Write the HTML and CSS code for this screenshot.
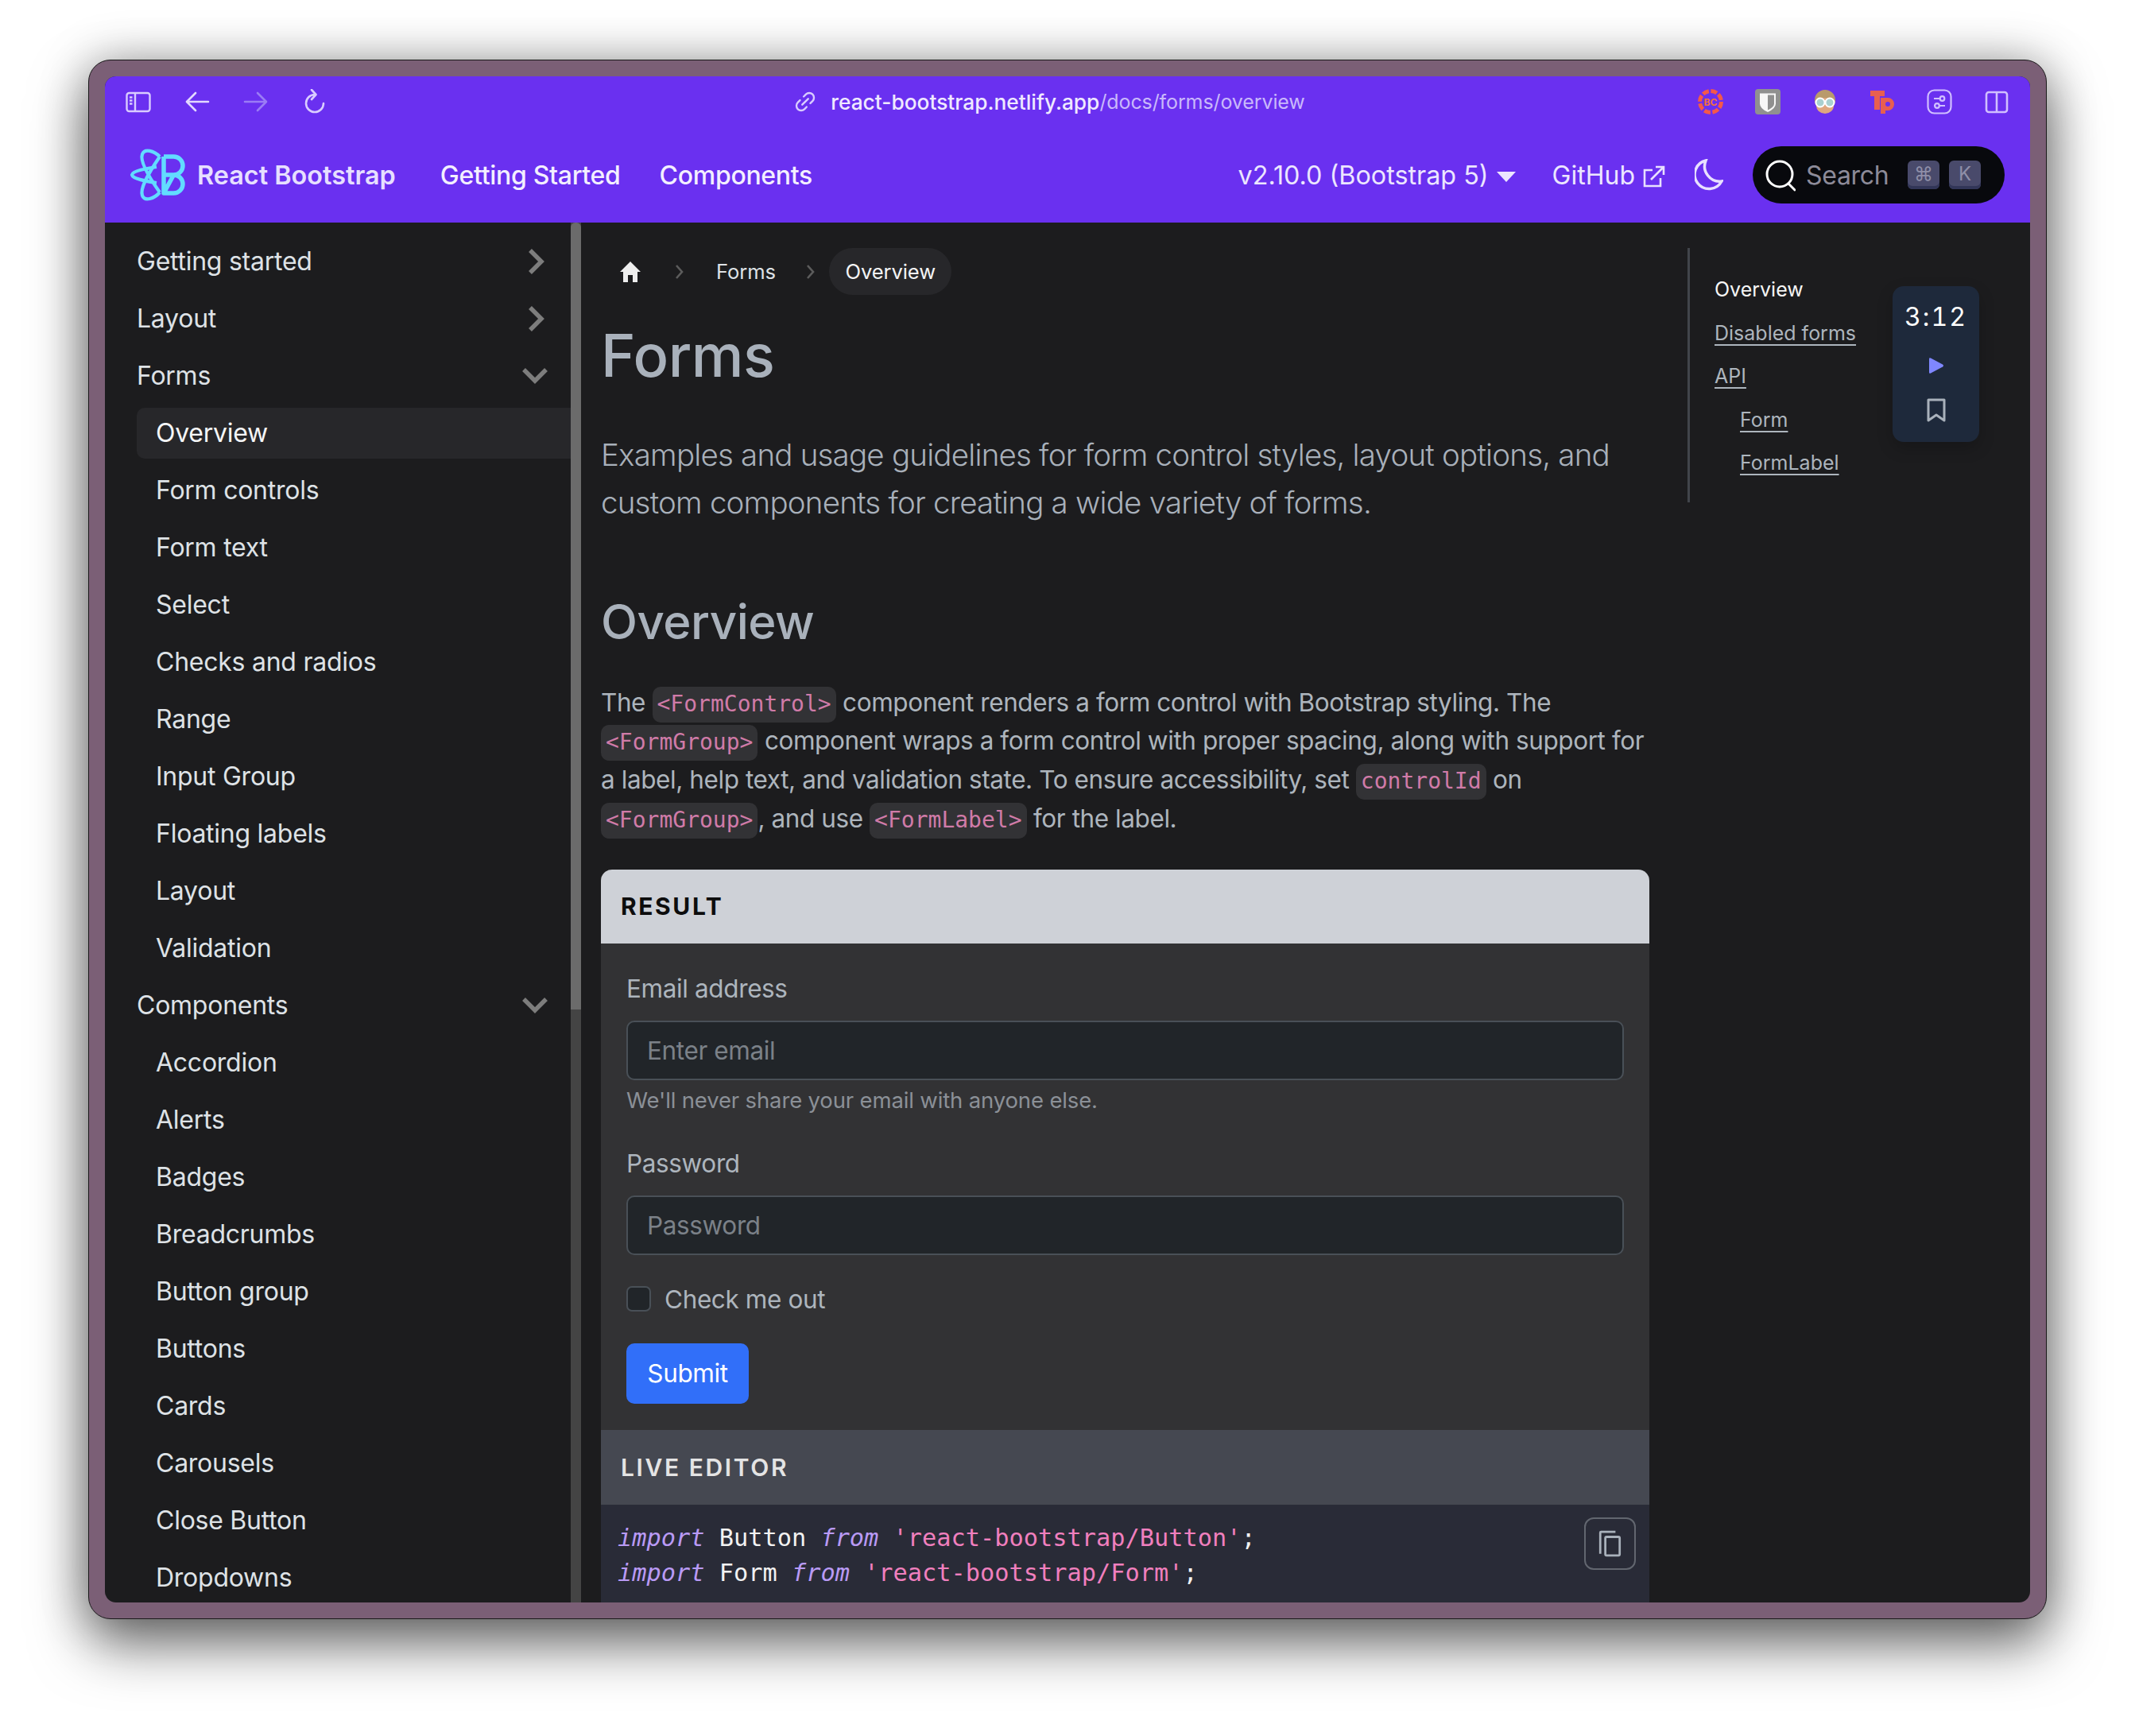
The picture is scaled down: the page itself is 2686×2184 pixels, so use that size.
FILE: index.html
```html
<!DOCTYPE html>
<html lang="en">
<head>
<meta charset="utf-8">
<title>Forms | React Bootstrap</title>
<link rel="stylesheet" href="styles.css">
</head>
<body>
<div class="window">
  <div class="screen">
    <header class="purple">
      <div class="toolbar">
        <div class="tool-left">
          <svg class="ti" viewBox="0 0 32 32" fill="none" stroke="#d9ccff" stroke-width="2.4"><rect x="1.500" y="5" width="29" height="23" rx="3"/><path d="M12 5v23"/><path d="M5 10.500h3.500M5 14.500h3.500M5 18.500h3.500"/></svg>
          <svg class="ti" viewBox="0 0 32 32" fill="none" stroke="#e2d8ff" stroke-width="2.6" stroke-linecap="round" stroke-linejoin="round"><path d="M30 16H4M14 5 3 16l11 11"/></svg>
          <svg class="ti" viewBox="0 0 32 32" fill="none" stroke="#9a7cf5" stroke-width="2.6" stroke-linecap="round" stroke-linejoin="round"><path d="M2 16h26M18 5l11 11-11 11"/></svg>
          <svg class="ti" viewBox="0 0 32 32" fill="none" stroke="#d9ccff" stroke-width="2.6" stroke-linecap="round" stroke-linejoin="round"><path d="M16 7A11 11 0 1 0 27 18M12 1l5.500 6-5.500 6"/></svg>
        </div>
        <div class="url">
          <svg class="link-ico" viewBox="0 0 28 28" fill="none" stroke="#d9ccff" stroke-width="2.6" stroke-linecap="round"><path d="M12 7l3-3a6 6 0 0 1 9 9l-3 3"/><path d="M16 21l-3 3a6 6 0 0 1-9-9l3-3"/><path d="M10 18l8-8"/></svg>
          <span class="host">react-bootstrap.netlify.app</span><span class="path">/docs/forms/overview</span>
        </div>
        <div class="tool-right">
          <svg class="ext" viewBox="0 0 32 32"><circle cx="16" cy="16" r="13.500" fill="none" stroke="#f4584a" stroke-width="5" stroke-dasharray="8 2.600"/><text x="16" y="20.500" text-anchor="middle" class="bc">BC</text></svg>
          <svg class="ext" viewBox="0 0 32 32"><rect width="32" height="32" rx="4" fill="#909090"/><path d="M6 5.500h20v13q0 6-10 10.500-10-4.500-10-10.500z" fill="#f7f7f7"/><path d="M16 7.500h8v11q0 4-8 8z" fill="#909090"/></svg>
          <svg class="ext" viewBox="0 0 32 32"><ellipse cx="16" cy="14" rx="13" ry="13" fill="#b99a6c"/><ellipse cx="16" cy="21" rx="11" ry="10" fill="#dfa77f"/><circle cx="10" cy="17" r="5.500" fill="#a9d0d0" stroke="#fff" stroke-width="2"/><circle cx="22" cy="17" r="5.500" fill="#a9d0d0" stroke="#fff" stroke-width="2"/></svg>
          <svg class="ext" viewBox="0 0 32 32"><path d="M1 2h18v7h-6v17H6V9H1z" fill="#e85f50"/><path fill-rule="evenodd" d="M14 11h9a8 8 0 0 1 0 16h-3v4h-6zM23 16a3 3 0 1 0 0 6 3 3 0 0 0 0-6z" fill="#e85f50"/></svg>
          <svg class="ext" viewBox="0 0 32 32" fill="none" stroke="#d0bfff" stroke-width="2.200"><rect x="1.500" y="1.500" width="29" height="29" rx="8"/><path d="M9 12h14M9 21h14"/><circle cx="19.500" cy="12" r="2.800" fill="#6a30f0"/><circle cx="13" cy="21" r="2.800" fill="#6a30f0"/></svg>
          <svg class="ext" viewBox="0 0 32 32" fill="none" stroke="#d0bfff" stroke-width="2.600"><rect x="3" y="4" width="26" height="25" rx="3"/><path d="M16 4v25"/></svg>
        </div>
      </div>
      <nav class="navbar">
        <a class="brand">
          <svg class="logo" viewBox="0 0 68 64" fill="none" stroke="#62dcff" stroke-width="4.200" stroke-linejoin="round"><path d="M37 9C30 2 18-2 15 6c-3 8 5 24 22 48M37 54c-7 8-19 12-22 4-3-8 5-24 22-49"/><path d="M33 22C20 24 3 27 2 32c1 5 18 8 31 10"/><path stroke-width="5.500" d="M42 9h12.500a11.500 11.500 0 0 1 0 23H42M54.500 32a11.500 11.500 0 0 1 0 23H42zM42 9v46"/></svg>
          <span>React Bootstrap</span>
        </a>
        <a class="nav-link first">Getting Started</a>
        <a class="nav-link">Components</a>
        <span class="spring"></span>
        <a class="nav-link version">v2.10.0 (Bootstrap 5)<i class="caret"></i></a>
        <a class="nav-link github">GitHub
          <svg class="extlink" viewBox="0 0 28 28" fill="none" stroke="#e8e0ff" stroke-width="2.600"><path d="M12 6H2v20h20V16"/><path d="M10 18 25 3M16 2h10v10"/></svg>
        </a>
        <svg class="moon" viewBox="0 0 36 40" fill="none" stroke="#e8e0ff" stroke-width="3.500"><path d="M14 2A18 18 0 1 0 34 28 19 19 0 0 1 14 2z"/></svg>
        <div class="search">
          <svg class="glass" viewBox="0 0 38 42" fill="none" stroke="#fff" stroke-width="3"><circle cx="18" cy="20" r="16"/><path d="M29 32l8 8" stroke-linecap="round"/></svg>
          <span class="search-label">Search</span>
          <kbd class="key">⌘</kbd><kbd class="key">K</kbd>
        </div>
      </nav>
    </header>
    <div class="body-row">
      <aside class="sidebar">
        <ul class="side-list">
          <li class="sec">Getting started<svg class="chev" viewBox="0 0 24 32"><path d="M4 2l14 14L4 30" /></svg></li>
          <li class="sec">Layout<svg class="chev" viewBox="0 0 24 32"><path d="M4 2l14 14L4 30" /></svg></li>
          <li class="sec">Forms<svg class="chev down" viewBox="0 0 32 24"><path d="M2 4l14 14L30 4" /></svg></li>
          <li class="sub active">Overview</li>
          <li class="sub">Form controls</li>
          <li class="sub">Form text</li>
          <li class="sub">Select</li>
          <li class="sub">Checks and radios</li>
          <li class="sub">Range</li>
          <li class="sub">Input Group</li>
          <li class="sub">Floating labels</li>
          <li class="sub">Layout</li>
          <li class="sub">Validation</li>
          <li class="sec">Components<svg class="chev down" viewBox="0 0 32 24"><path d="M2 4l14 14L30 4" /></svg></li>
          <li class="sub">Accordion</li>
          <li class="sub">Alerts</li>
          <li class="sub">Badges</li>
          <li class="sub">Breadcrumbs</li>
          <li class="sub">Button group</li>
          <li class="sub">Buttons</li>
          <li class="sub">Cards</li>
          <li class="sub">Carousels</li>
          <li class="sub">Close Button</li>
          <li class="sub">Dropdowns</li>
        </ul>
        <div class="scrolltrack"><div class="scrollthumb"></div></div>
      </aside>
      <main class="content">
        <div class="crumbs">
          <svg class="home" viewBox="0 0 28 28"><path d="M14 1 1 14h4v13h6v-9h6v9h6V14h4z" fill="#eee"/></svg>
          <svg class="sep" viewBox="0 0 12 20"><path d="M2 2l7 8-7 8"/></svg>
          <span class="crumb">Forms</span>
          <svg class="sep" viewBox="0 0 12 20"><path d="M2 2l7 8-7 8"/></svg>
          <span class="crumb current">Overview</span>
        </div>
        <h1>Forms</h1>
        <p class="lead">Examples and usage guidelines for form control styles, layout options, and custom components for creating a wide variety of forms.</p>
        <h2>Overview</h2>
        <p class="para">The <code>&lt;FormControl&gt;</code> component renders a form control with Bootstrap styling. The <code>&lt;FormGroup&gt;</code> component wraps a form control with proper spacing, along with support for a label, help text, and validation state. To ensure accessibility, set <code>controlId</code> on <code>&lt;FormGroup&gt;</code>, and use <code>&lt;FormLabel&gt;</code> for the label.</p>
        <section class="card">
          <div class="card-head result">RESULT</div>
          <form class="card-body">
            <label class="lbl">Email address</label>
            <div class="input">Enter email</div>
            <div class="help">We'll never share your email with anyone else.</div>
            <label class="lbl second">Password</label>
            <div class="input">Password</div>
            <div class="check"><span class="box"></span>Check me out</div>
            <div class="submit">Submit</div>
          </form>
          <div class="card-head live">LIVE EDITOR</div>
          <div class="code">
            <pre class="code-text"><em>import</em> Button <em>from</em> <b>'react-bootstrap/Button'</b>;
<em>import</em> Form <em>from</em> <b>'react-bootstrap/Form'</b>;</pre>
            <div class="copy"><svg viewBox="0 0 28 32" fill="none" stroke="#a9b1bb" stroke-width="2.600"><path d="M2 28V3q0-1 1-1h17"/><rect x="8" y="8" width="17" height="22" rx="1.500"/></svg></div>
          </div>
        </section>
      </main>
      <aside class="toc">
        <ul class="toc-list">
          <li class="toc-active">Overview</li>
          <li><a>Disabled forms</a></li>
          <li><a>API</a></li>
          <li class="toc-in"><a>Form</a></li>
          <li class="toc-in"><a>FormLabel</a></li>
        </ul>
      </aside>
      <div class="timer">
        <div class="time">3:12</div>
        <svg class="play" viewBox="0 0 20 22"><path d="M1 2.500q0-2 2-1l15 8q2 1.500 0 3l-15 8q-2 1-2-1z" fill="#7f87ff"/></svg>
        <svg class="mark" viewBox="0 0 24 30" fill="none" stroke="#a9b1bb" stroke-width="3" stroke-linejoin="round"><path d="M2 2h20v26l-10-7-10 7z"/></svg>
      </div>
    </div>
  </div>
</div>
</body>
</html>
```

FILE: styles.css
```css
* { box-sizing: border-box; }
html, body { margin: 0; padding: 0; background: #fff; }
body { width: 2686px; height: 2184px; overflow: hidden; padding: 75px 111px 0; font-family: Inter, "Noto Sans", sans-serif; }
.window {
  width: 2464px; height: 1962px; padding: 20px;
  background: #7b5f76; border-radius: 28px;
  border: 1.500px solid #1a1a1a;
  box-shadow: 0 32px 70px rgba(0,0,0,.55), 0 0 60px rgba(0,0,0,.28);
}
.screen { position: relative; width: 100%; height: 100%; overflow: hidden; border-radius: 14px; background: #1c1c1e; display: flex; flex-direction: column; }
.purple { background: #6a30f0; height: 184px; flex: none; display: flex; flex-direction: column; }
.toolbar { height: 64px; display: flex; align-items: center; padding: 0 26px 0 26px; position: relative; flex: none; }
.tool-left { display: flex; gap: 42px; align-items: center; margin-top: -1px; }
.ti { width: 32px; height: 32px; }
.url { flex: 1; display: flex; align-items: center; justify-content: center; font-size: 26.300px; font-weight: 500; padding-left: 94px; }
.link-ico { width: 26px; height: 26px; margin-right: 19px; }
.host { color: #efe9ff; }
.path { color: #c9b8fb; font-weight: 400; font-size: 25px; letter-spacing: -.1px; }
.tool-right { display: flex; gap: 40px; align-items: center; }
.ext { width: 32px; height: 32px; display: block; overflow: visible; }
.bc { font: 700 12px Inter, sans-serif; fill: #f4703a; }
.navbar { height: 120px; display: flex; align-items: center; padding: 0 32px; }
.brand { display: flex; align-items: center; color: #e6dfff; font-size: 32.400px; font-weight: 600; }
.logo { width: 68px; height: 64px; margin-right: 16px; overflow: visible; }
.nav-link { color: #f3efff; font-size: 32px; font-weight: 500; letter-spacing: -.3px; white-space: nowrap; display: flex; align-items: center; }
.first { margin-left: 56px; margin-right: 49px; }
.spring { flex: 1; }
.version { color: #ece6ff; font-weight: 400; letter-spacing: 0; font-size: 32.300px; }
.caret { width: 0; height: 0; margin-left: 10px; margin-top: 4px; border-left: 12px solid transparent; border-right: 12px solid transparent; border-top: 13px solid #ece6ff; }
.github { color: #ece6ff; font-weight: 400; letter-spacing: 0; margin-left: 46px; }
.extlink { width: 28px; height: 28px; margin-left: 10px; margin-top: 4px; }
.moon { width: 36px; height: 40px; margin-left: 37px; }
.search { width: 317px; height: 72px; margin-left: 37px; border-radius: 36px; background: #08090d; display: flex; align-items: center; padding: 0 30px 0 16px; }
.glass { width: 38px; height: 42px; flex: none; }
.search-label { color: #8d8b99; font-size: 32px; letter-spacing: -.3px; margin-left: 13px; flex: 1; }
.key { width: 40px; height: 36px; margin-left: 12px; border-radius: 6px; background: #494a6b; box-shadow: inset 0 -4px 0 #323658; color: #8f8fa8; font: 24px Inter, "DejaVu Sans", sans-serif; display: flex; align-items: center; justify-content: center; padding-bottom: 4px; }
.body-row { flex: 1; min-height: 0; display: flex; }
.sidebar { width: 601px; flex: none; display: flex; overflow: hidden; }
.side-list { list-style: none; margin: 0; padding: 13px 0 0 40px; width: 586px; flex: none; }
.side-list li { height: 72px; line-height: 72px; font-size: 32px; letter-spacing: -.25px; color: #dee2e6; position: relative; white-space: nowrap; display: flex; align-items: center; justify-content: space-between; }
.sec { padding-right: 31px; }
.sub { padding-left: 24px; }
.side-list .active { height: 64px; line-height: 64px; margin: 4px 0; background: #27272a; border-radius: 10px 0 0 10px; color: #f5f6f7; }
.chev { width: 24px; height: 32px; fill: none; stroke: #7d7d7d; stroke-width: 5.500; }
.chev.down { width: 32px; height: 24px; margin-right: -2px; }
.scrolltrack { width: 13px; background: #444; flex: none; }
.scrollthumb { height: 990px; background: #6b6b6b; border-radius: 6px 6px 0 0; }
.content { width: 1342px; flex: none; padding: 32px 0 0 23px; overflow: hidden; }
.crumbs { display: flex; align-items: center; height: 59px; margin-left: 2px; font-size: 25.600px; letter-spacing: -.1px; color: #dee2e6; }
.home { width: 28px; height: 28px; margin-left: 21px; margin-right: 2px; }
.sep { width: 12px; height: 20px; fill: none; stroke: #5c5c5c; stroke-width: 2.600; margin-left: 40px; margin-right: 40px; }
.crumb { white-space: nowrap; }
.crumb + .sep { margin-left: 38px; }
.sep + .crumb.current { margin-left: -22.500px; }
.current { background: #27272a; color: #f3f4f5; border-radius: 30px; padding: 0 20px; height: 59px; line-height: 59px; }
h1 { margin: 32px 0 0; color: #a9b1bb; font-size: 74px; font-weight: 500; letter-spacing: -.5px; line-height: 1.200; }
.lead { margin: 50px 0 0; color: #a8b0ba; font-size: 38.500px; letter-spacing: -.8px; font-weight: 300; line-height: 60px; }
h2 { margin: 84px 0 0; color: #a9b1bb; font-size: 60px; letter-spacing: -.5px; font-weight: 500; line-height: 1.200; }
.para { margin: 42px 0 0; color: #adb5bd; font-size: 31.500px; letter-spacing: -.42px; line-height: 48.600px; }
code { font-family: "DejaVu Sans Mono", monospace; font-size: 28px; letter-spacing: 0; line-height: 1; background: #323235; color: #d07ba8; padding: 5px 6px 7px; border-radius: 10px; }
.card { margin-top: 40px; border-radius: 14px 14px 0 0; overflow: hidden; }
.card-head { height: 93px; line-height: 93px; padding-left: 25px; font-size: 30px; font-weight: 700; letter-spacing: 2.600px; }
.result { background: #ced1d7; color: #0d0d0d; }
.live { height: 94px; line-height: 94px; background: #454851; color: #e4e4e4; font-weight: 600; }
.card-body { background: #323234; height: 612px; padding: 33px 32px 0; display: flex; flex-direction: column; font-size: 31.500px; letter-spacing: -.38px; }
.lbl { color: #adb5bd; line-height: 48px; height: 48px; }
.lbl.second { margin-top: 35px; }
.input { height: 75px; margin-top: 16px; background: #212529; border: 2px solid #495057; border-radius: 10px; color: #7b8188; line-height: 71px; padding-left: 24px; }
.help { color: #8b9097; font-size: 27.500px; letter-spacing: -.15px; line-height: 42px; margin-top: 4px; }
.check { display: flex; align-items: center; margin-top: 39px; color: #adb5bd; height: 32px; }
.box { width: 31px; height: 32px; margin-right: 17px; background: #212529; border: 2px solid #495057; border-radius: 7px; }
.submit { width: 154px; height: 76px; margin-top: 40px; background: #316ff9; border-radius: 10px; color: #fff; line-height: 76px; text-align: center; }
.code { position: relative; background: #292b37; height: 300px; padding: 20px 0 0 21px; }
.code-text { margin: 0; color: #f2f2f2; font-family: "DejaVu Sans Mono", monospace; font-size: 30.300px; line-height: 44px; }
.code-text em { color: #b99af5; font-style: italic; }
.code-text b { color: #f07fbe; font-weight: 400; }
.copy { position: absolute; top: 16px; right: 17px; width: 65px; height: 66px; border: 2px solid #62666f; border-radius: 12px; display: flex; align-items: center; justify-content: center; }
.copy svg { width: 30px; height: 34px; }
.toc { flex: 1; padding: 32px 0 0 48px; }
.toc-list { list-style: none; margin: 0; width: 100%; height: 320px; border-left: 3px solid #41454b; padding: 25px 0 0 31px; font-size: 25px; line-height: 54.600px; color: #adb5bd; }
.toc-active { color: #f5f5f5; }
.toc-list a { text-decoration: underline; text-underline-offset: 5px; text-decoration-thickness: 2px; }
.toc-in { padding-left: 32px; }
.timer { position: absolute; left: 2249px; top: 264px; width: 109px; height: 196px; background: #1e293b; border-radius: 14px; display: flex; flex-direction: column; align-items: center; box-shadow: 0 8px 20px rgba(0,0,0,.2); }
.time { margin-top: 21px; color: #fff; font-size: 32px; line-height: 36px; letter-spacing: 2px; font-variant-numeric: tabular-nums; }
.play { width: 20px; height: 22px; margin-top: 32px; }
.mark { width: 24px; height: 30px; margin-top: 30px; }
```
